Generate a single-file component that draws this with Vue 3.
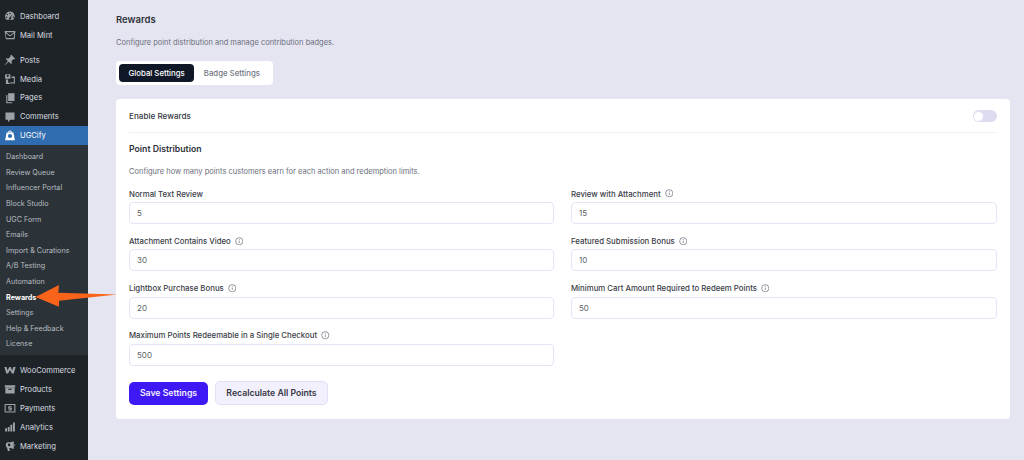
<script setup>
const topA = [
  { n: 'Dashboard', i: 'M8 2a6.500 6.500 0 0 0-6.500 6.500c0 1.900.8 3.500 2 4.500h9a6.500 6.500 0 0 0-4.500-11zM8 3.500a1 1 0 1 1 0 2 1 1 0 0 1 0-2zM4.500 5a1 1 0 1 1 0 2 1 1 0 0 1 0-2zM3.500 8.500a1 1 0 1 1 0 2 1 1 0 0 1 0-2zM12.500 8.500a1 1 0 1 1 0 2 1 1 0 0 1 0-2zM11.500 5l-2.300 5.200a1.500 1.500 0 1 1-1.300-.6z' },
  { n: 'Mail Mint', i: 'M.8 2.500h14.400l-1 11H2.500zM2.700 4.300l5.300 4 5.300-4zM2.300 5.500l.9 6.500h9.600l.9-6.500L8 10z' },
]
const topB = [
  { n: 'Posts', i: 'M9.800 1l5.200 5.200-1.100.9-1-.5-2.900 2.700.4 2.900-1.100 1-2.900-2.900L1 15l-.3-.3 4.500-5.300-2.900-2.900 1-1 2.900.4 2.700-2.900-.5-1z' },
  { n: 'Media', i: 'M1.500 1.500h7v6h-7zM3.500 3.700a1.500 1.500 0 1 0 3 0 1.500 1.500 0 0 0-3 0zM10 4.500h4.500v9.500H8.500v-2H10v.5h3V6.500h-3zM2.500 8.500h3V13h2v1.500h-5z' },
  { n: 'Pages', i: 'M5.500 1.500H14V12H5.500zM3 4h1.500v9.500H11V15H3z' },
  { n: 'Comments', i: 'M2 2h12v9.500H8.500L5.500 15v-3.500H2z' },
]
const sub = ['Dashboard', 'Review Queue', 'Influencer Portal', 'Block Studio', 'UGC Form', 'Emails', 'Import & Curations', 'A/B Testing', 'Automation', 'Rewards', 'Settings', 'Help & Feedback', 'License']
const bottom = [
  { n: 'WooCommerce', i: 'M.5 4h3l1.200 4.800L7 4h2l2 4.800L12.300 4h3.200L13 12.500h-2.500L8 8l-2.500 4.500H3z' },
  { n: 'Products', i: 'M1 3h14v2.500H1zM1.800 6h12.400v8H1.800zM5.500 7.500V9h5V7.500z' },
  { n: 'Payments', i: 'M.8 2.500h14.400V14H.8zM2.300 4v8.500h11.400V4zM8.700 5v.9h1.700V7H7.400v.8h3V11H8.700v.9H7.300V11H5.600V9.900h3v-.8h-3V5.900h1.700V5z' },
  { n: 'Analytics', i: 'M1.500 9.500h2.500V14H1.500zM5 8h2.500v6H5zM8.500 5h2.500v9H8.500zM12 2h2.500v12H12z' },
  { n: 'Marketing', i: 'M13 1.500V12L8.500 10.500H7l.9 4H5.200L4 10.200a4.300 4.300 0 0 1 .5-7.200H9zM14 5a2 2 0 0 1 0 3.500zM6.800 4.800a1.700 1.700 0 1 0 0 3.400 1.700 1.700 0 0 0 0-3.400z' },
]
const fields = [
  { l: 'Normal Text Review', v: '5', info: false },
  { l: 'Review with Attachment', v: '15', info: true },
  { l: 'Attachment Contains Video', v: '30', info: true },
  { l: 'Featured Submission Bonus', v: '10', info: true },
  { l: 'Lightbox Purchase Bonus', v: '20', info: true },
  { l: 'Minimum Cart Amount Required to Redeem Points', v: '50', info: true },
  { l: 'Maximum Points Redeemable in a Single Checkout', v: '500', info: true },
]
</script>

<template>
  <div class="page">
    <aside class="side">
      <div class="group first">
        <div v-for="m in topA" :key="m.n" class="item">
          <svg class="ic" viewBox="0 0 16 16"><path :d="m.i" fill-rule="evenodd" /></svg>
          <span>{{ m.n }}</span>
        </div>
      </div>
      <div class="group second">
        <div v-for="m in topB" :key="m.n" class="item">
          <svg class="ic" viewBox="0 0 16 16"><path :d="m.i" fill-rule="evenodd" /></svg>
          <span>{{ m.n }}</span>
        </div>
        <div class="item active">
          <svg class="ic" viewBox="0 0 16 16">
            <path fill-rule="evenodd" d="M5.500 4.500a2.500 2.500 0 0 1 5 0h2L14.500 15h-13L3.500 4.500zM6.700 4.500h2.600a1.300 1.300 0 0 0-2.600 0zM8 6.500a2.800 2.800 0 1 0 0 5.600 2.800 2.800 0 0 0 0-5.600z" />
          </svg>
          <span>UGCify</span>
        </div>
      </div>
      <div class="sub">
        <div v-for="s in sub" :key="s" class="sub-item" :class="{ current: s === 'Rewards' }">{{ s }}</div>
      </div>
      <div class="group third">
        <div v-for="m in bottom" :key="m.n" class="item">
          <svg class="ic" viewBox="0 0 16 16"><path :d="m.i" fill-rule="evenodd" /></svg>
          <span>{{ m.n }}</span>
        </div>
      </div>
    </aside>

    <main class="main">
      <h1 class="title">Rewards</h1>
      <p class="desc">Configure point distribution and manage contribution badges.</p>
      <div class="tabs">
        <div class="tab on">Global Settings</div>
        <div class="tab">Badge Settings</div>
      </div>
      <section class="card">
        <div class="enable">
          <span class="enable-label">Enable Rewards</span>
          <span class="toggle"><span class="knob"></span></span>
        </div>
        <h2 class="sec">Point Distribution</h2>
        <p class="sec-desc">Configure how many points customers earn for each action and redemption limits.</p>
        <div class="grid">
          <div v-for="f in fields" :key="f.l" class="field">
            <div class="label">
              <span>{{ f.l }}</span>
              <svg v-if="f.info" class="info" viewBox="0 0 16 16" fill="none">
                <circle cx="8" cy="8" r="6.800" stroke="#5c5f6e" stroke-width="1.200" />
                <path d="M8 7.200v4" stroke="#5c5f6e" stroke-width="1.300" />
                <circle cx="8" cy="5" r=".9" fill="#5c5f6e" />
              </svg>
            </div>
            <div class="input">{{ f.v }}</div>
          </div>
        </div>
        <div class="actions">
          <button class="btn primary">Save Settings</button>
          <button class="btn ghost">Recalculate All Points</button>
        </div>
      </section>
      <svg class="arrow" viewBox="0 0 84 26">
        <path d="M1.500 14 L25 2 L24.300 9.700 L83 11.500 L25 17.700 L25 23.700 Z" fill="#f9631a" />
      </svg>
    </main>
  </div>
</template>

<style>
html, body { margin: 0; background: #e5e5f1; }
</style>

<style scoped>
.page {
  display: flex;
  width: 1024px;
  height: 460px;
  overflow: hidden;
  background: #e5e5f1;
  font-family: Inter, "Liberation Sans", sans-serif;
}
.side {
  width: 88px;
  flex: none;
  background: #1d2327;
  color: #dadde0;
  font-size: 7.600px;
}
.group.first { padding-top: 7px; }
.group.second { padding-top: 6.500px; }
.group.third { padding-top: 5.500px; }
.item {
  display: flex;
  align-items: center;
  height: 18.750px;
  padding-left: 3.500px;
  gap: 4.500px;
  white-space: nowrap;
}
.group.third .item { height: 19px; }
.ic {
  width: 12px;
  height: 12px;
  flex: none;
  fill: #9ca2a7;
}
.item.active {
  background: #2f6cb0;
  color: #fff;
}
.item.active .ic { fill: #fff; }
.sub {
  background: #2c3338;
  padding: 4.500px 0 3.500px 6px;
}
.sub-item {
  height: 15.600px;
  line-height: 15.600px;
  font-size: 7.200px;
  color: #b6bcc1;
  white-space: nowrap;
}
.sub-item.current {
  color: #fff;
  font-weight: 700;
}
.main {
  position: relative;
  flex: 1;
  padding: 0 14px 0 28px;
  min-width: 0;
}
.title {
  margin: 13px 0 0;
  font-size: 9.500px;
  line-height: 14px;
  font-weight: 600;
  color: #30323c;
}
.desc {
  margin: 10px 0 0;
  font-size: 7.500px;
  line-height: 12px;
  color: #6b6e7c;
}
.tabs {
  display: inline-flex;
  margin-top: 12px;
  padding: 3px;
  background: #fff;
  border-radius: 4px;
  vertical-align: top;
}
.tab {
  height: 18px;
  line-height: 18px;
  padding: 0 9.500px;
  font-size: 7.800px;
  font-weight: 500;
  color: #737685;
  white-space: nowrap;
}
.tab.on {
  padding: 0 9.500px;
  background: #101828;
  color: #fff;
  border-radius: 4px;
}
.card {
  box-sizing: border-box;
  height: 320px;
  margin-top: 14px;
  padding: 0 13px;
  background: #fff;
  border-radius: 4px;
}
.enable {
  display: flex;
  align-items: center;
  justify-content: space-between;
  box-sizing: border-box;
  height: 34px;
  padding-top: 1px;
  border-bottom: 1px solid #f1f0f8;
}
.enable-label {
  font-size: 8.150px;
  font-weight: 500;
  color: #35373f;
}
.toggle {
  display: flex;
  align-items: center;
  width: 24px;
  height: 12px;
  padding-left: 1px;
  box-sizing: border-box;
  border-radius: 6px;
  background: #dedcf1;
}
.knob {
  width: 9px;
  height: 9px;
  border-radius: 50%;
  background: #fff;
}
.sec {
  margin: 10px 0 0;
  font-size: 8.700px;
  line-height: 13px;
  font-weight: 600;
  color: #30323c;
}
.sec-desc {
  margin: 9.500px 0 0;
  font-size: 7.500px;
  line-height: 12px;
  color: #6b6e7c;
}
.grid {
  display: grid;
  grid-template-columns: 425px 426px;
  column-gap: 17px;
  row-gap: 10.800px;
  margin-top: 10px;
}
.label {
  display: flex;
  align-items: center;
  gap: 4px;
  height: 12px;
  font-size: 7.800px;
  font-weight: 500;
  color: #3a3c46;
  white-space: nowrap;
}
.info {
  width: 8.500px;
  height: 8.500px;
  flex: none;
}
.input {
  box-sizing: border-box;
  height: 22px;
  margin-top: 2.500px;
  padding-left: 7px;
  line-height: 20px;
  font-size: 8px;
  color: #5d5f66;
  background: #fff;
  border: 1px solid #e6e3f8;
  border-radius: 4px;
}
.actions {
  display: flex;
  align-items: center;
  gap: 7px;
  margin-top: 15.500px;
}
.btn {
  box-sizing: border-box;
  font-family: inherit;
  font-size: 8.700px;
  font-weight: 600;
  border-radius: 5px;
  padding: 0;
  white-space: nowrap;
}
.primary {
  width: 79px;
  height: 23px;
  background: #3f19f5;
  color: #f1eeff;
  border: none;
}
.ghost {
  width: 113px;
  height: 24px;
  background: #f2f0fc;
  color: #373845;
  border: 1px solid #e3e0f5;
}
.arrow {
  position: absolute;
  left: -54px;
  top: 283px;
  width: 84px;
  height: 26px;
}
</style>
